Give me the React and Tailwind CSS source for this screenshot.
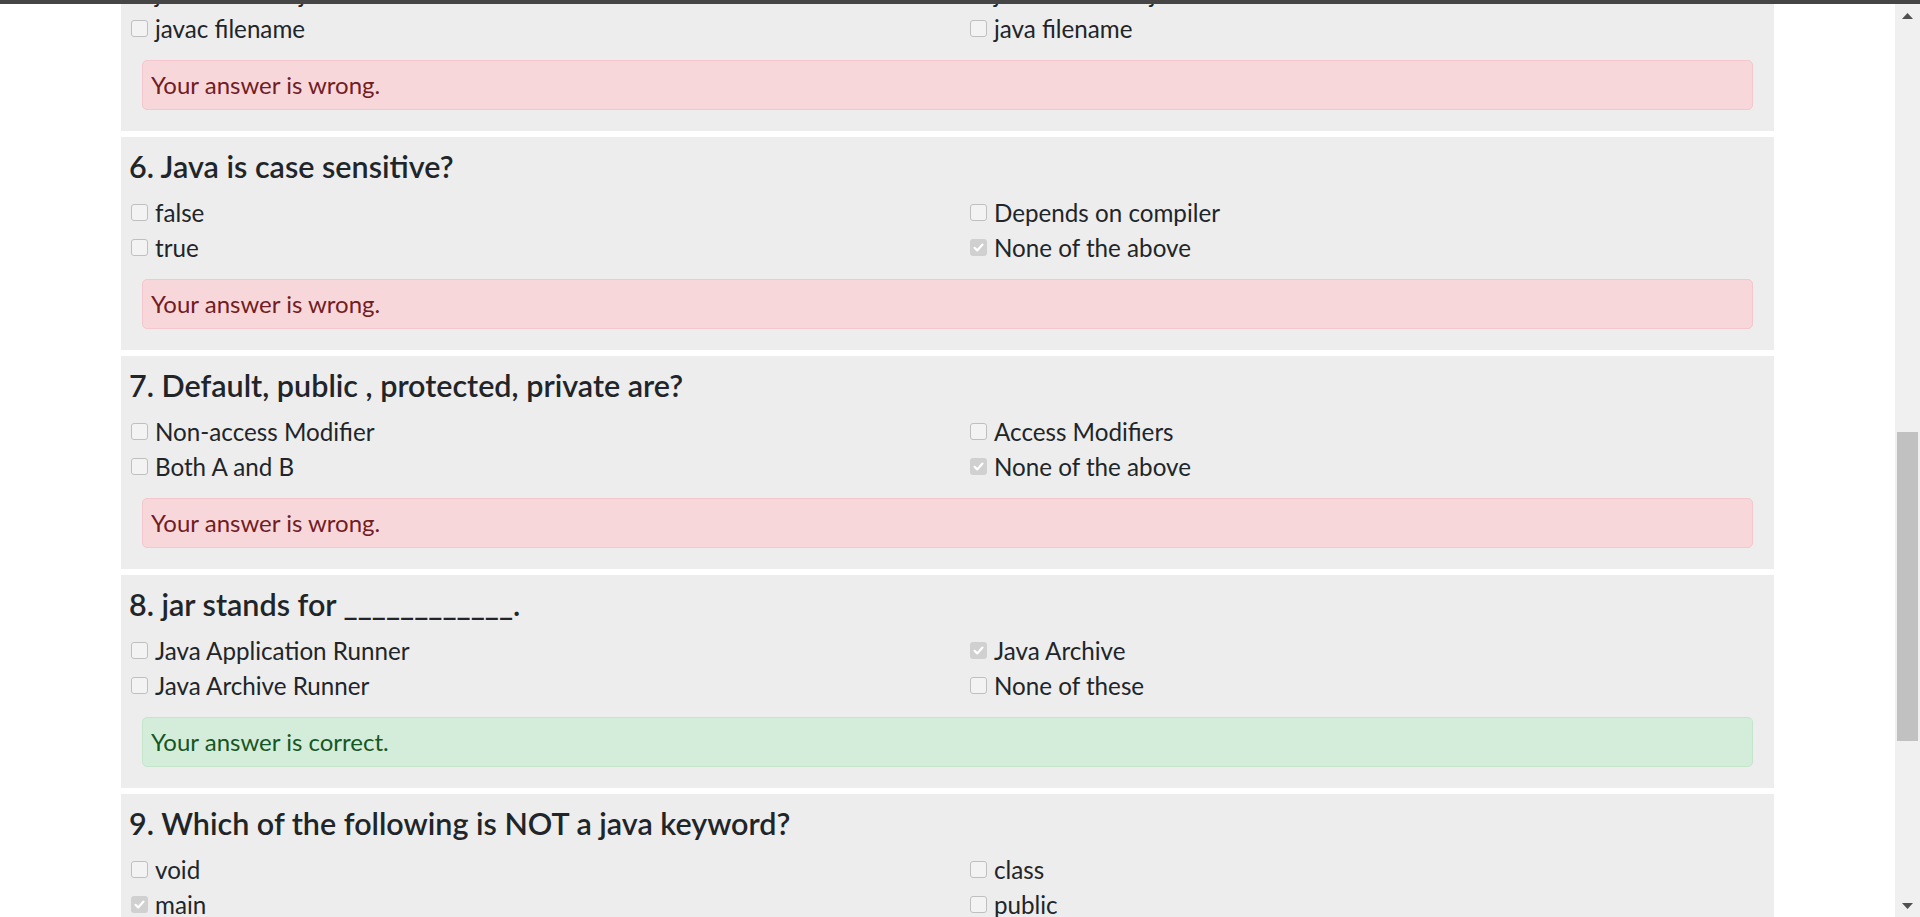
import React from "react";

const questions = [
  {
    title: "5. How do you run a java program?",
    opts: [
      ["java filename.java", false],
      ["javac filename.java", false],
      ["javac filename", false],
      ["java filename", false],
    ],
    correct: false,
  },
  {
    title: "6. Java is case sensitive?",
    opts: [
      ["false", false],
      ["Depends on compiler", false],
      ["true", false],
      ["None of the above", true],
    ],
    correct: false,
  },
  {
    title: "7. Default, public , protected, private are?",
    opts: [
      ["Non-access Modifier", false],
      ["Access Modifiers", false],
      ["Both A and B", false],
      ["None of the above", true],
    ],
    correct: false,
  },
  {
    title: "8. jar stands for ____________.",
    opts: [
      ["Java Application Runner", false],
      ["Java Archive", true],
      ["Java Archive Runner", false],
      ["None of these", false],
    ],
    correct: true,
  },
  {
    title: "9. Which of the following is NOT a java keyword?",
    opts: [
      ["void", false],
      ["class", false],
      ["main", true],
      ["public", false],
    ],
    correct: false,
  },
];

function Box({ checked }) {
  if (checked) {
    return (
      <span className="flex h-[17px] w-[17px] shrink-0 items-center justify-center rounded-[3px] bg-[#d0d0d0]">
        <svg width="13" height="13" viewBox="0 0 13 13">
          <path d="M2.5 6.8 L5.2 9.4 L10.5 3.6" fill="none" stroke="#ffffff" strokeWidth="2.2" strokeLinecap="round" strokeLinejoin="round" />
        </svg>
      </span>
    );
  }
  return <span className="block h-[17px] w-[17px] shrink-0 rounded-[3px] border-[1.5px] border-[#bfbfbf] bg-[#f3f3f3]" />;
}

function Option({ label, checked }) {
  return (
    <div className="flex h-[35px] items-center">
      <Box checked={checked} />
      <span className="ml-[7px] text-[24.2px] leading-[35px] text-[#212529]">{label}</span>
    </div>
  );
}

function Card({ q }) {
  return (
    <div className="mx-auto mb-[6px] h-[213px] w-[1653px] bg-[#ededed] pt-[11px]">
      <h4 className="pl-[8px] text-[30.5px] font-semibold leading-[36px] text-[#212529]">{q.title}</h4>
      <div className="mt-[11px] grid grid-cols-[839px_1fr] pl-[10px]">
        {q.opts.map(([label, checked], i) => (
          <Option key={i} label={label} checked={checked} />
        ))}
      </div>
      <div
        className={
          q.correct
            ? "mx-[21px] mt-[14px] flex h-[50px] items-center rounded-[5px] border border-[#c3e6cb] bg-[#d4edda] px-[8px] text-[24px] text-[#155724]"
            : "mx-[21px] mt-[14px] flex h-[50px] items-center rounded-[5px] border border-[#f5c6cb] bg-[#f8d7da] px-[8px] text-[24px] text-[#721c24]"
        }
      >
        {q.correct ? "Your answer is correct." : "Your answer is wrong."}
      </div>
    </div>
  );
}

export default function App() {
  return (
    <div
      className="flex h-[917px] w-[1920px] flex-col overflow-hidden bg-white"
      style={{ fontFamily: "Lato, 'Open Sans', sans-serif" }}
    >
      <div className="h-[4px] shrink-0 bg-[#454545]" />
      <div className="flex min-h-0 flex-1">
        <main className="min-w-0 flex-1 overflow-hidden">
          <div className="-mt-[86px]">
            {questions.map((q, i) => (
              <Card key={i} q={q} />
            ))}
          </div>
        </main>
        <div className="flex w-[25px] shrink-0 flex-col items-center bg-[#f0f0f0]">
          <svg className="mt-[9px]" width="11" height="6" viewBox="0 0 11 6">
            <path d="M0 6 L5.5 0 L11 6 Z" fill="#505050" />
          </svg>
          <div className="mt-[413px] h-[309px] w-[21px] bg-[#c1c1c1]" />
          <div className="flex-1" />
          <svg className="mb-[8px]" width="11" height="6" viewBox="0 0 11 6">
            <path d="M0 0 L11 0 L5.5 6 Z" fill="#505050" />
          </svg>
        </div>
      </div>
    </div>
  );
}
